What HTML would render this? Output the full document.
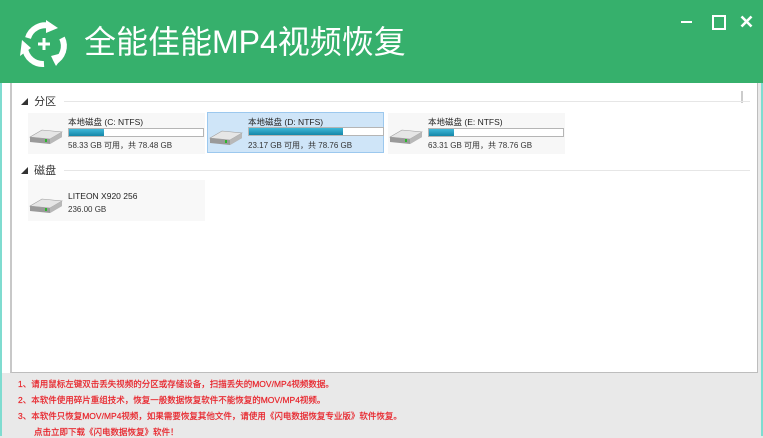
<!DOCTYPE html><html><head><meta charset="utf-8"><style>
body{margin:0;width:763px;height:436px;overflow:hidden;background:#e9e9e9;font-family:"Liberation Sans","Noto Sans CJK SC",sans-serif;position:relative}
.hdr{position:absolute;left:0;top:0;width:763px;height:83px;background:#36b06c}
.title{position:absolute;left:84px;top:20px;color:#fff;font-size:32px;line-height:44px}
.panel{position:absolute;left:10px;top:83px;width:745px;height:289px;background:#fff;border:1px solid #bdbdbd;border-top:none;border-left:2px solid #c8c8c8}
.a{position:absolute}
.sec{font-size:11px;color:#333}
.tri{font-size:7px;vertical-align:1px}
.hl{position:absolute;height:1px;background:#e6e6e6}
.tile{position:absolute;width:177px;height:41px;background:#f7f7f7}
.sel{background:#cfe5f8;border:1px solid #9cc8ee;box-sizing:border-box}
.lbl{position:absolute;left:40px;top:3px;font-size:8.5px;color:#222}
.bar{position:absolute;left:40px;top:15px;width:134px;height:7px;border:1px solid #b5b5b5;background:#fff}
.fill{height:100%;background:linear-gradient(#3fb8d8,#1486a8)}
.st{position:absolute;left:40px;top:27px;font-size:8px;color:#333}
.red{position:absolute;left:18px;font-size:8.5px;color:#e8232a;-webkit-text-stroke:0.2px #e8232a}
</style></head><body>
<div class="hdr">
<svg class="a" style="left:16px;top:18px" width="56" height="52" viewBox="0 0 56 52">
<g fill="none" stroke="#fff" stroke-width="6">
<path d="M12 20 A18 18 0 0 1 34 8"/><path d="M46 20 A18 18 0 0 1 38 44"/><path d="M28 46 A18 18 0 0 1 9 30"/></g>
<path d="M30 2 L42 10 L30 15Z M50 34 L40 48 L35 38Z M4 38 L6 22 L15 30Z" fill="#fff"/>
<path d="M22 26h12M28 20v12" stroke="#fff" stroke-width="3"/></svg>
<div class="title">全能佳能MP4视频恢复</div>
<div class="a" style="left:681px;top:21px;width:11px;height:2px;background:#fff"></div>
<div class="a" style="left:712px;top:15px;width:10px;height:11px;border:2px solid #fff"></div>
<svg class="a" style="left:740px;top:15px" width="13" height="13"><path d="M1.5 1.5L11.5 11.5M11.5 1.5L1.5 11.5" stroke="#fff" stroke-width="2.6"/></svg>
</div>
<div class="a" style="left:0;top:83px;width:2px;height:353px;background:#7fdcd0"></div>
<div class="a" style="left:761px;top:83px;width:2px;height:353px;background:#7fdcd0"></div>
<div class="a" style="left:2px;top:83px;width:8px;height:290px;background:#fff"></div>
<div class="panel"></div>
<div class="a" style="left:741px;top:91px;width:2px;height:12px;background:#ccc"></div>
<div class="a sec" style="left:21px;top:93px"><span class="tri">◢</span> &nbsp;分区</div>
<div class="hl" style="left:64px;top:101px;width:686px"></div>
<div class="a sec" style="left:21px;top:162px"><span class="tri">◢</span> &nbsp;磁盘</div>
<div class="hl" style="left:64px;top:170px;width:686px"></div>

<svg width="0" height="0" style="position:absolute"><defs><g id="d">
<path d="M2 14 L14 7 L34 9 L34 14 L22 21 L2 19Z" fill="#9a9a9a"/>
<path d="M2 14 L14 7 L34 9 L22 16Z" fill="#e6e6e6" stroke="#a0a0a0" stroke-width=".6"/>
<path d="M22 16 L34 9 L34 14 L22 21Z" fill="#b8b8b8"/>
<rect x="17" y="16" width="2" height="3" fill="#2db52d"/></g></defs></svg>

<div class="tile" style="left:28px;top:113px"><svg class="a" style="left:0;top:10px" width="36" height="24"><use href="#d"/></svg>
<div class="lbl">本地磁盘 (C: NTFS)</div><div class="bar"><div class="fill" style="width:26%"></div></div><div class="st">58.33 GB 可用，共 78.48 GB</div></div>
<div class="tile sel" style="left:207px;top:112px"><svg class="a" style="left:0;top:11px" width="36" height="24"><use href="#d"/></svg>
<div class="lbl">本地磁盘 (D: NTFS)</div><div class="bar" style="top:14px"><div class="fill" style="width:70%"></div></div><div class="st">23.17 GB 可用，共 78.76 GB</div></div>
<div class="tile" style="left:388px;top:113px"><svg class="a" style="left:0;top:10px" width="36" height="24"><use href="#d"/></svg>
<div class="lbl">本地磁盘 (E: NTFS)</div><div class="bar"><div class="fill" style="width:19%"></div></div><div class="st">63.31 GB 可用，共 78.76 GB</div></div>
<div class="tile" style="left:28px;top:180px;background:#f8f8f8"><svg class="a" style="left:0;top:12px" width="36" height="24"><use href="#d"/></svg>
<div class="lbl" style="top:11px">LITEON X920 256</div><div class="st" style="top:25px">236.00 GB</div></div>

<div class="red" style="top:378px">1、请用鼠标左键双击丢失视频的分区或存储设备，扫描丢失的MOV/MP4视频数据。</div>
<div class="red" style="top:394px">2、本软件使用碎片重组技术，恢复一般数据恢复软件不能恢复的MOV/MP4视频。</div>
<div class="red" style="top:410px">3、本软件只恢复MOV/MP4视频，如果需要恢复其他文件，请使用《闪电数据恢复专业版》软件恢复。</div>
<div class="red" style="top:426px;left:34px">点击立即下载《闪电数据恢复》软件！</div>
</body></html>
